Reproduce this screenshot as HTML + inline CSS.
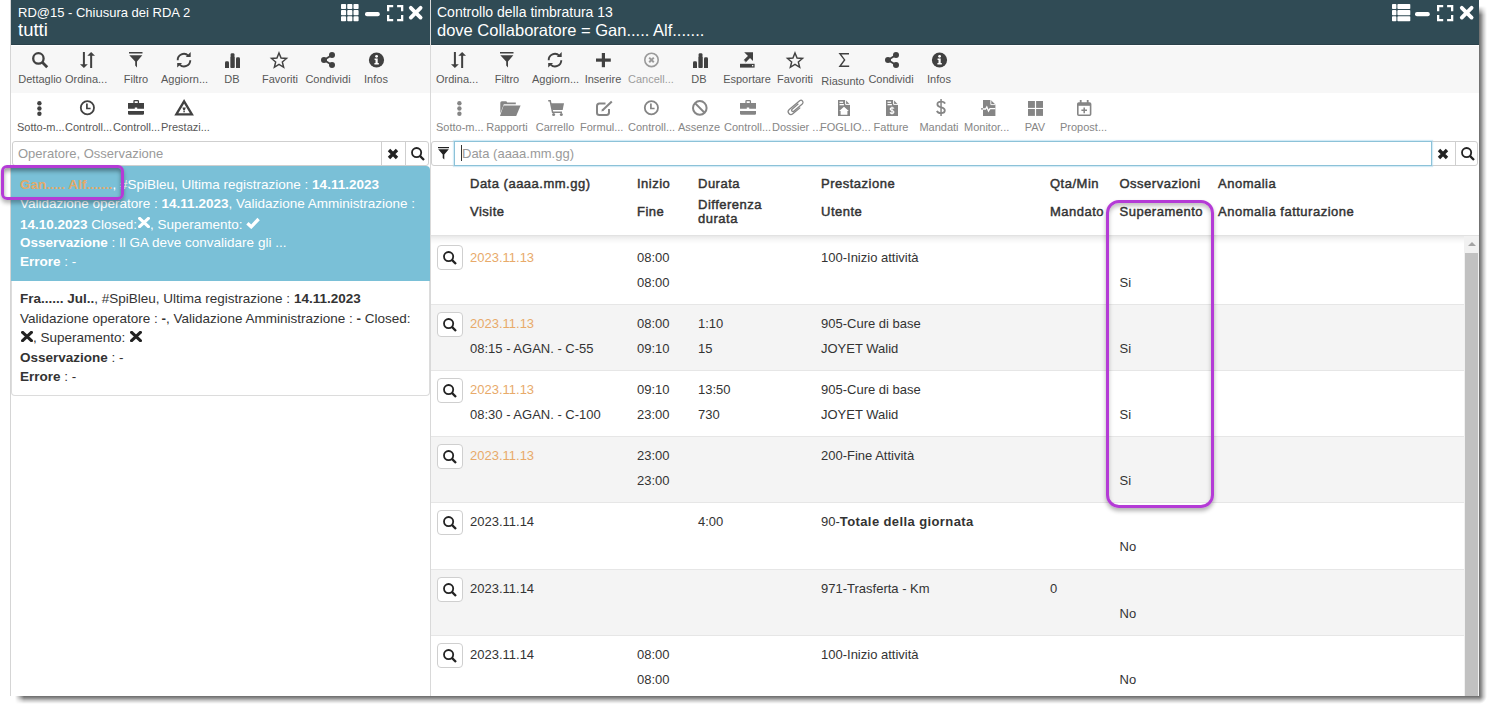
<!DOCTYPE html><html><head><meta charset="utf-8"><style>
*{box-sizing:border-box;margin:0;padding:0}
html,body{width:1494px;height:711px;overflow:hidden;background:#fff;font-family:"Liberation Sans",sans-serif;color:#333}
.abs{position:absolute}
.hdr{position:absolute;top:0;height:45px;background:#304b55;color:#fff;box-shadow:inset 0 -1px 0 rgba(0,0,0,0.12)}
.t1{position:absolute;font-size:13px;margin-top:1px;white-space:nowrap;line-height:1}
.t2{position:absolute;font-size:18.5px;white-space:nowrap;line-height:1}
.ico{position:absolute;line-height:0}
.lb{position:absolute;font-size:11px;line-height:11px;white-space:nowrap;color:#575757}
.lbc{width:60px;text-align:center}
.g{color:#868686}
.dis{color:#9c9c9c}
.rias{margin-top:1.5px}
</style></head><body>
<div class="abs" style="left:1479px;top:0;width:8px;height:696px;background:linear-gradient(to right,rgba(0,0,0,0.58), rgba(0,0,0,0.45) 25%, rgba(0,0,0,0.22) 55%, rgba(0,0,0,0.06) 85%, rgba(0,0,0,0) 100%);-webkit-mask-image:linear-gradient(to bottom,transparent 6px,#000 15px);mask-image:linear-gradient(to bottom,transparent 6px,#000 15px)"></div>
<div class="abs" style="left:10px;top:696px;width:1469px;height:8px;background:linear-gradient(to bottom,rgba(0,0,0,0.58), rgba(0,0,0,0.45) 25%, rgba(0,0,0,0.22) 55%, rgba(0,0,0,0.06) 85%, rgba(0,0,0,0) 100%);-webkit-mask-image:linear-gradient(to right,transparent 5px,#000 14px);mask-image:linear-gradient(to right,transparent 5px,#000 14px)"></div>
<div class="abs" style="left:1479px;top:696px;width:8px;height:8px;background:radial-gradient(circle at 0 0,rgba(0,0,0,0.58), rgba(0,0,0,0.45) 2px, rgba(0,0,0,0.22) 4.4px, rgba(0,0,0,0.06) 6.8px, rgba(0,0,0,0) 8px)"></div>
<div class="abs" style="left:10px;top:0;width:420px;height:696px;background:#fff;border-left:1px solid #d5d5d5"></div>
<div class="abs" style="left:430px;top:0;width:1049px;height:696px;background:#fff;border-left:1px solid #d9d9d9"></div>
<div class="hdr" style="left:11px;width:419px"><div class="t1" style="left:7px;top:5px">RD@15 - Chiusura dei RDA 2</div><div class="t2" style="left:7px;top:21px">tutti</div></div>
<div class="hdr" style="left:431px;width:1048px"><div class="t1" style="left:6px;top:4px;font-size:14px">Controllo della timbratura 13</div><div class="t2" style="left:6px;top:22px;font-size:16.5px">dove Collaboratore = Gan..... Alf.......</div></div>
<div class="ico" style="left:341.3px;top:3.9px"><svg width="18" height="18" viewBox="0 0 18 18" style="display:block;overflow:visible"><rect x="0" y="0" width="5.1" height="5.1" rx="0.8" fill="#fff"/><rect x="0" y="6.1" width="5.1" height="5.1" rx="0.8" fill="#fff"/><rect x="0" y="12.2" width="5.1" height="5.1" rx="0.8" fill="#fff"/><rect x="6.25" y="0" width="5.1" height="5.1" rx="0.8" fill="#fff"/><rect x="6.25" y="6.1" width="5.1" height="5.1" rx="0.8" fill="#fff"/><rect x="6.25" y="12.2" width="5.1" height="5.1" rx="0.8" fill="#fff"/><rect x="12.5" y="0" width="5.1" height="5.1" rx="0.8" fill="#fff"/><rect x="12.5" y="6.1" width="5.1" height="5.1" rx="0.8" fill="#fff"/><rect x="12.5" y="12.2" width="5.1" height="5.1" rx="0.8" fill="#fff"/></svg></div>
<div class="ico" style="left:365px;top:11.8px"><svg width="15" height="4" viewBox="0 0 15 4" style="display:block;overflow:visible"><rect x="0" y="0" width="14.8" height="4.2" rx="2" fill="#fff"/></svg></div>
<div class="ico" style="left:386.8px;top:5px"><svg width="17" height="17" viewBox="0 0 17 17" style="display:block;overflow:visible"><path d="M0 6.2 V0 H6.2 V2.3 H2.3 V6.2 Z" fill="#fff"/><path d="M0 6.2 V0 H6.2 V2.3 H2.3 V6.2 Z" fill="#fff" transform="translate(16.3,0) scale(-1,1)"/><path d="M0 6.2 V0 H6.2 V2.3 H2.3 V6.2 Z" fill="#fff" transform="translate(0,16.3) scale(1,-1)"/><path d="M0 6.2 V0 H6.2 V2.3 H2.3 V6.2 Z" fill="#fff" transform="translate(16.3,16.3) scale(-1,-1)"/></svg></div>
<div class="ico" style="left:409.3px;top:6.3px"><svg width="14" height="14" viewBox="0 0 14 14" style="display:block;overflow:visible"><path d="M1.8 1.8 L11.6 11.6 M11.6 1.8 L1.8 11.6" stroke="#fff" stroke-width="3.8" stroke-linecap="round"/></svg></div>
<div class="ico" style="left:1391.7px;top:3.9px"><svg width="19" height="18" viewBox="0 0 19 18" style="display:block;overflow:visible"><rect x="0" y="0" width="4.4" height="5.1" rx="0.8" fill="#fff"/><rect x="5.4" y="0" width="12.9" height="5.1" rx="0.8" fill="#fff"/><rect x="0" y="6.1" width="4.4" height="5.1" rx="0.8" fill="#fff"/><rect x="5.4" y="6.1" width="12.9" height="5.1" rx="0.8" fill="#fff"/><rect x="0" y="12.2" width="4.4" height="5.1" rx="0.8" fill="#fff"/><rect x="5.4" y="12.2" width="12.9" height="5.1" rx="0.8" fill="#fff"/></svg></div>
<div class="ico" style="left:1415px;top:11.8px"><svg width="15" height="4" viewBox="0 0 15 4" style="display:block;overflow:visible"><rect x="0" y="0" width="14.8" height="4.2" rx="2" fill="#fff"/></svg></div>
<div class="ico" style="left:1436.7px;top:5px"><svg width="17" height="17" viewBox="0 0 17 17" style="display:block;overflow:visible"><path d="M0 6.2 V0 H6.2 V2.3 H2.3 V6.2 Z" fill="#fff"/><path d="M0 6.2 V0 H6.2 V2.3 H2.3 V6.2 Z" fill="#fff" transform="translate(16.3,0) scale(-1,1)"/><path d="M0 6.2 V0 H6.2 V2.3 H2.3 V6.2 Z" fill="#fff" transform="translate(0,16.3) scale(1,-1)"/><path d="M0 6.2 V0 H6.2 V2.3 H2.3 V6.2 Z" fill="#fff" transform="translate(16.3,16.3) scale(-1,-1)"/></svg></div>
<div class="ico" style="left:1459.6px;top:6.3px"><svg width="14" height="14" viewBox="0 0 14 14" style="display:block;overflow:visible"><path d="M1.8 1.8 L11.6 11.6 M11.6 1.8 L1.8 11.6" stroke="#fff" stroke-width="3.8" stroke-linecap="round"/></svg></div>
<div class="abs" style="left:11px;top:46px;width:419px;height:47px;background:#f7f7f7"></div>
<div class="abs" style="left:431px;top:46px;width:1048px;height:47px;background:#f7f7f7"></div>
<div class="ico" style="left:32px;top:52px"><svg width="16" height="16" viewBox="0 0 16 16" style="display:block;overflow:visible"><circle cx="6.4" cy="6.4" r="5.2" fill="none" stroke="#414141" stroke-width="2.3"/><line x1="10" y1="10" x2="15.2" y2="15.2" stroke="#414141" stroke-width="2.8"/></svg></div>
<div class="lb lbc " style="left:10px;top:74px">Dettaglio</div>
<div class="ico" style="left:80px;top:52px"><svg width="15" height="16" viewBox="0 0 15 16" style="display:block;overflow:visible"><rect x="2.9" y="0" width="2" height="13" fill="#414141"/><polygon points="0,12.2 7.8,12.2 3.9,16" fill="#414141"/><polygon points="7.3,3.8 15,3.8 11.15,0" fill="#414141"/><rect x="10.15" y="3" width="2" height="13" fill="#414141"/></svg></div>
<div class="lb " style="left:65px;top:74px">Ordina...</div>
<div class="ico" style="left:129px;top:52px"><svg width="14" height="16" viewBox="0 0 14 16" style="display:block;overflow:visible"><rect x="0" y="0" width="13.5" height="1.5" fill="#414141"/><polygon points="0.3,3.2 13.3,3.2 8,9.5 8,15.5 6.2,13.4 6.2,9.5" fill="#414141"/></svg></div>
<div class="lb lbc " style="left:106px;top:74px">Filtro</div>
<div class="ico" style="left:176px;top:52px"><svg width="16" height="16" viewBox="0 0 16 16" style="display:block;overflow:visible"><path d="M1.7 8.2 A6.2 6.2 0 0 1 12.3 3.6" fill="none" stroke="#414141" stroke-width="1.9"/><polygon points="14.7,0 14.7,4.9 9.8,4.9" fill="#414141"/><path d="M14.3 8.3 A6.2 6.2 0 0 1 3.7 12.6" fill="none" stroke="#414141" stroke-width="1.9"/><polygon points="1.2,15.6 1.2,10.9 6.1,10.9" fill="#414141"/></svg></div>
<div class="lb " style="left:161px;top:74px">Aggiorn...</div>
<div class="ico" style="left:225px;top:53px"><svg width="15" height="15" viewBox="0 0 15 15" style="display:block;overflow:visible"><rect x="0" y="8.3" width="4" height="6.7" rx="1.4" fill="#414141"/><rect x="0" y="11" width="4" height="4" fill="#414141"/><rect x="5.6" y="0.2" width="3.9" height="14.8" rx="1.4" fill="#414141"/><rect x="5.6" y="4" width="3.9" height="11" fill="#414141"/><rect x="11" y="4.2" width="4" height="10.8" rx="1.4" fill="#414141"/><rect x="11" y="8" width="4" height="7" fill="#414141"/></svg></div>
<div class="lb lbc " style="left:202px;top:74px">DB</div>
<div class="ico" style="left:271px;top:53px"><svg width="16" height="14" viewBox="0 0.4 16 14" style="display:block;overflow:visible"><polygon points="8.00,0.40 10.06,5.47 15.51,5.86 11.33,9.38 12.64,14.69 8.00,11.80 3.36,14.69 4.67,9.38 0.49,5.86 5.94,5.47" fill="none" stroke="#414141" stroke-width="1.45" stroke-linejoin="miter" stroke-miterlimit="10"/></svg></div>
<div class="lb lbc " style="left:250px;top:74px">Favoriti</div>
<div class="ico" style="left:321px;top:52px"><svg width="14" height="16" viewBox="0 0 14 16" style="display:block;overflow:visible"><line x1="3" y1="8" x2="11" y2="3" stroke="#414141" stroke-width="2"/><line x1="3" y1="8" x2="11" y2="13" stroke="#414141" stroke-width="2"/><circle cx="11" cy="3" r="3" fill="#414141"/><circle cx="3" cy="8" r="3" fill="#414141"/><circle cx="11" cy="13" r="3" fill="#414141"/></svg></div>
<div class="lb lbc " style="left:298px;top:74px">Condividi</div>
<div class="ico" style="left:368.5px;top:52px"><svg width="15" height="16" viewBox="0 0 15 16" style="display:block;overflow:visible"><circle cx="7.5" cy="8" r="7.6" fill="#414141"/><circle cx="7.6" cy="4.3" r="1.4" fill="#fff"/><path d="M5.6 6.6 H8.7 V11 H9.8 V12.6 H5.4 V11 H6.5 V8.1 H5.6 Z" fill="#fff"/></svg></div>
<div class="lb lbc " style="left:346px;top:74px">Infos</div>
<div class="ico" style="left:37px;top:100.8px"><svg width="5" height="15" viewBox="0 0 5 15" style="display:block;overflow:visible"><circle cx="2.4" cy="2.3" r="2.2" fill="#414141"/><circle cx="2.4" cy="7.5" r="2.2" fill="#414141"/><circle cx="2.4" cy="12.7" r="2.2" fill="#414141"/></svg></div>
<div class="lb " style="left:17px;top:122px">Sotto-m...</div>
<div class="ico" style="left:80.4px;top:100.3px"><svg width="15" height="16" viewBox="0 0 15 16" style="display:block;overflow:visible"><circle cx="7.4" cy="7.7" r="6.6" fill="none" stroke="#414141" stroke-width="1.8"/><path d="M6.9 3.6 V8.5 H10.6" fill="none" stroke="#414141" stroke-width="1.7"/></svg></div>
<div class="lb " style="left:65px;top:122px">Controll...</div>
<div class="ico" style="left:127.8px;top:100.3px"><svg width="16" height="15" viewBox="0 0 16 15" style="display:block;overflow:visible"><path d="M6 3.2 V1.2 Q6 0.6 6.6 0.6 H9.8 Q10.4 0.6 10.4 1.2 V3.2" fill="none" stroke="#414141" stroke-width="1.3"/><path d="M0 3 H16 V8.7 H9.2 V7.6 H6.8 V8.7 H0 Z" fill="#414141"/><path d="M0 11 H16 V13.6 Q16 14.8 14.8 14.8 H1.2 Q0 14.8 0 13.6 Z" fill="#414141"/></svg></div>
<div class="lb " style="left:113px;top:122px">Controll...</div>
<div class="ico" style="left:175px;top:100.3px"><svg width="18" height="16" viewBox="0 0 18 16" style="display:block;overflow:visible"><polygon points="9.1,1.3 16.9,14.4 1.3,14.4" fill="none" stroke="#414141" stroke-width="2.3" stroke-linejoin="miter"/><path d="M7.4 7.6 H10.8 L9.8 10.4 H8.4 Z" fill="#414141"/><rect x="8.4" y="11" width="1.4" height="1.3" fill="#414141"/></svg></div>
<div class="lb " style="left:161px;top:122px">Prestazi...</div>
<div class="ico" style="left:451px;top:52px"><svg width="15" height="16" viewBox="0 0 15 16" style="display:block;overflow:visible"><rect x="2.9" y="0" width="2" height="13" fill="#414141"/><polygon points="0,12.2 7.8,12.2 3.9,16" fill="#414141"/><polygon points="7.3,3.8 15,3.8 11.15,0" fill="#414141"/><rect x="10.15" y="3" width="2" height="13" fill="#414141"/></svg></div>
<div class="lb " style="left:436px;top:74px">Ordina...</div>
<div class="ico" style="left:500px;top:52px"><svg width="14" height="16" viewBox="0 0 14 16" style="display:block;overflow:visible"><rect x="0" y="0" width="13.5" height="1.5" fill="#414141"/><polygon points="0.3,3.2 13.3,3.2 8,9.5 8,15.5 6.2,13.4 6.2,9.5" fill="#414141"/></svg></div>
<div class="lb lbc " style="left:477px;top:74px">Filtro</div>
<div class="ico" style="left:547px;top:52px"><svg width="16" height="16" viewBox="0 0 16 16" style="display:block;overflow:visible"><path d="M1.7 8.2 A6.2 6.2 0 0 1 12.3 3.6" fill="none" stroke="#414141" stroke-width="1.9"/><polygon points="14.7,0 14.7,4.9 9.8,4.9" fill="#414141"/><path d="M14.3 8.3 A6.2 6.2 0 0 1 3.7 12.6" fill="none" stroke="#414141" stroke-width="1.9"/><polygon points="1.2,15.6 1.2,10.9 6.1,10.9" fill="#414141"/></svg></div>
<div class="lb " style="left:532px;top:74px">Aggiorn...</div>
<div class="ico" style="left:595.7px;top:53.4px"><svg width="15" height="14" viewBox="0 0 15 14" style="display:block;overflow:visible"><rect x="5.8" y="0" width="3.2" height="14.2" fill="#414141"/><rect x="0" y="5.5" width="14.8" height="3.2" fill="#414141"/></svg></div>
<div class="lb lbc " style="left:573px;top:74px">Inserire</div>
<div class="ico" style="left:644.4px;top:52px"><svg width="15" height="16" viewBox="0 0 15 16" style="display:block;overflow:visible"><circle cx="7.5" cy="7.9" r="6.7" fill="none" stroke="#9a9a9a" stroke-width="1.6"/><path d="M5.2 5.6 L9.8 10.2 M9.8 5.6 L5.2 10.2" stroke="#9a9a9a" stroke-width="2"/></svg></div>
<div class="lb dis" style="left:628px;top:74px">Cancell...</div>
<div class="ico" style="left:693px;top:53px"><svg width="15" height="15" viewBox="0 0 15 15" style="display:block;overflow:visible"><rect x="0" y="8.3" width="4" height="6.7" rx="1.4" fill="#414141"/><rect x="0" y="11" width="4" height="4" fill="#414141"/><rect x="5.6" y="0.2" width="3.9" height="14.8" rx="1.4" fill="#414141"/><rect x="5.6" y="4" width="3.9" height="11" fill="#414141"/><rect x="11" y="4.2" width="4" height="10.8" rx="1.4" fill="#414141"/><rect x="11" y="8" width="4" height="7" fill="#414141"/></svg></div>
<div class="lb lbc " style="left:669px;top:74px">DB</div>
<div class="ico" style="left:740px;top:52.3px"><svg width="15" height="16" viewBox="0 0 15 16" style="display:block;overflow:visible"><rect x="0" y="11.8" width="14.6" height="3.8" fill="#414141"/><rect x="12" y="13" width="1.3" height="1.3" fill="#f7f7f7"/><path d="M4.6 9.4 L10.2 3.8" stroke="#414141" stroke-width="3"/><polygon points="4.2,0.2 13,0.2 13,9" fill="#414141"/><path d="M3.2 7.7 L5.4 9.9" stroke="#f7f7f7" stroke-width="0.9"/></svg></div>
<div class="lb lbc " style="left:717px;top:74px">Esportare</div>
<div class="ico" style="left:787px;top:53px"><svg width="16" height="14" viewBox="0 0.4 16 14" style="display:block;overflow:visible"><polygon points="8.00,0.40 10.06,5.47 15.51,5.86 11.33,9.38 12.64,14.69 8.00,11.80 3.36,14.69 4.67,9.38 0.49,5.86 5.94,5.47" fill="none" stroke="#414141" stroke-width="1.45" stroke-linejoin="miter" stroke-miterlimit="10"/></svg></div>
<div class="lb lbc " style="left:765px;top:74px">Favoriti</div>
<div class="ico" style="left:838.8px;top:53px"><svg width="10" height="14" viewBox="0 0 10 14" style="display:block;overflow:visible"><path d="M10 0.7 H0.9 L5.6 6.9 L0.9 13.3 H10.2" fill="none" stroke="#414141" stroke-width="1.4" stroke-linejoin="miter"/></svg></div>
<div class="lb lbc rias" style="left:813px;top:74px">Riasunto</div>
<div class="ico" style="left:885px;top:52px"><svg width="14" height="16" viewBox="0 0 14 16" style="display:block;overflow:visible"><line x1="3" y1="8" x2="11" y2="3" stroke="#414141" stroke-width="2"/><line x1="3" y1="8" x2="11" y2="13" stroke="#414141" stroke-width="2"/><circle cx="11" cy="3" r="3" fill="#414141"/><circle cx="3" cy="8" r="3" fill="#414141"/><circle cx="11" cy="13" r="3" fill="#414141"/></svg></div>
<div class="lb lbc " style="left:861px;top:74px">Condividi</div>
<div class="ico" style="left:932px;top:52px"><svg width="15" height="16" viewBox="0 0 15 16" style="display:block;overflow:visible"><circle cx="7.5" cy="8" r="7.6" fill="#414141"/><circle cx="7.6" cy="4.3" r="1.4" fill="#fff"/><path d="M5.6 6.6 H8.7 V11 H9.8 V12.6 H5.4 V11 H6.5 V8.1 H5.6 Z" fill="#fff"/></svg></div>
<div class="lb lbc " style="left:909px;top:74px">Infos</div>
<div class="ico" style="left:456.7px;top:100.8px"><svg width="5" height="15" viewBox="0 0 5 15" style="display:block;overflow:visible"><circle cx="2.4" cy="2.3" r="2.2" fill="#858585"/><circle cx="2.4" cy="7.5" r="2.2" fill="#858585"/><circle cx="2.4" cy="12.7" r="2.2" fill="#858585"/></svg></div>
<div class="lb g" style="left:436px;top:122px">Sotto-m...</div>
<div class="ico" style="left:499.6px;top:101px"><svg width="21" height="15" viewBox="0 0 21 15" style="display:block;overflow:visible"><path d="M0.3 12.5 V1.8 Q0.3 0.3 1.8 0.3 H5.8 Q6.8 0.3 7.2 1.5 H15.8 V3.2 H3.8 Z" fill="#858585"/><polygon points="3.6,4.6 20.6,4.6 16.2,15 0,15" fill="#858585"/></svg></div>
<div class="lb lbc g" style="left:477px;top:122px">Rapporti</div>
<div class="ico" style="left:548px;top:100px"><svg width="16" height="16" viewBox="0 0 16 16" style="display:block;overflow:visible"><path d="M0.2 0.8 H2.2 L4.6 12.2 H14" fill="none" stroke="#858585" stroke-width="1.5"/><polygon points="2.9,3.2 16,3.2 14.7,10 4.3,10" fill="#858585"/><circle cx="5.6" cy="14.5" r="1.5" fill="#858585"/><circle cx="13.3" cy="14.5" r="1.5" fill="#858585"/></svg></div>
<div class="lb lbc g" style="left:525px;top:122px">Carrello</div>
<div class="ico" style="left:595.7px;top:101px"><svg width="17" height="15" viewBox="0 0 17 15" style="display:block;overflow:visible"><path d="M9.5 2.5 H3.5 Q1 2.5 1 5 V11.8 Q1 14 3.3 14 H10.6 Q13 14 13 11.6 V8" fill="none" stroke="#858585" stroke-width="2"/><path d="M6.3 9.6 L15.8 0.6" stroke="#858585" stroke-width="2.1"/><polygon points="5.4,10.6 6,8.2 7.6,9.8" fill="#858585"/></svg></div>
<div class="lb g" style="left:580px;top:122px">Formul...</div>
<div class="ico" style="left:644px;top:100.3px"><svg width="15" height="16" viewBox="0 0 15 16" style="display:block;overflow:visible"><circle cx="7.4" cy="7.7" r="6.6" fill="none" stroke="#858585" stroke-width="1.8"/><path d="M6.9 3.6 V8.5 H10.6" fill="none" stroke="#858585" stroke-width="1.7"/></svg></div>
<div class="lb g" style="left:628px;top:122px">Controll...</div>
<div class="ico" style="left:691.8px;top:100px"><svg width="16" height="16" viewBox="0 0 16 16" style="display:block;overflow:visible"><circle cx="7.8" cy="7.9" r="6.8" fill="none" stroke="#858585" stroke-width="2"/><line x1="3" y1="3.1" x2="12.6" y2="12.7" stroke="#858585" stroke-width="2"/></svg></div>
<div class="lb lbc g" style="left:669px;top:122px">Assenze</div>
<div class="ico" style="left:739.6px;top:100.3px"><svg width="16" height="15" viewBox="0 0 16 15" style="display:block;overflow:visible"><path d="M6 3.2 V1.2 Q6 0.6 6.6 0.6 H9.8 Q10.4 0.6 10.4 1.2 V3.2" fill="none" stroke="#858585" stroke-width="1.3"/><path d="M0 3 H16 V8.7 H9.2 V7.6 H6.8 V8.7 H0 Z" fill="#858585"/><path d="M0 11 H16 V13.6 Q16 14.8 14.8 14.8 H1.2 Q0 14.8 0 13.6 Z" fill="#858585"/></svg></div>
<div class="lb g" style="left:724px;top:122px">Controll...</div>
<div class="ico" style="left:787.5px;top:100px"><svg width="17" height="15" viewBox="0 0 17 15" style="display:block;overflow:visible"><g transform="translate(8.3,7.4) rotate(-40) translate(-9.6,-2.9)"><path d="M12.5 5.6 H2.8 A2.8 2.8 0 0 1 2.8 0 H16.4 A2.05 2.05 0 0 1 16.4 4.1 H5.2 A1.3 1.3 0 0 1 5.2 1.5 H13.5" fill="none" stroke="#858585" stroke-width="1.25"/></g></svg></div>
<div class="lb g" style="left:772px;top:122px">Dossier ...</div>
<div class="ico" style="left:838px;top:100px"><svg width="12" height="16" viewBox="0 0 12 16" style="display:block;overflow:visible"><path d="M0 0 H7.6 L12 4.4 V16 H0 Z" fill="#858585"/><path d="M7.6 0 V4.4 H12" fill="none" stroke="#fff" stroke-width="1"/><rect x="1.5" y="1.6" width="3.6" height="1.3" fill="#fff"/><rect x="1.5" y="4" width="4.4" height="1.3" fill="#fff"/><polygon points="6,6.8 10.8,11 9.4,11 9.4,14.8 2.6,14.8 2.6,11 1.2,11" fill="#fff"/></svg></div>
<div class="lb g" style="left:820px;top:122px">FOGLIO...</div>
<div class="ico" style="left:886px;top:100px"><svg width="12" height="16" viewBox="0 0 12 16" style="display:block;overflow:visible"><path d="M0 0 H7.6 L12 4.4 V16 H0 Z" fill="#858585"/><path d="M7.6 0 V4.4 H12" fill="none" stroke="#fff" stroke-width="1"/><rect x="1.5" y="1.6" width="3.6" height="1.3" fill="#fff"/><rect x="1.5" y="4" width="4.4" height="1.3" fill="#fff"/><path d="M8 8.6 Q7.6 7.8 6 7.8 Q4.2 7.8 4.2 9.1 Q4.2 10.2 6 10.5 Q7.9 10.8 7.9 12 Q7.9 13.3 6 13.3 Q4.5 13.3 4 12.4" fill="none" stroke="#fff" stroke-width="1.2"/><rect x="5.5" y="6.6" width="1" height="7.8" fill="#fff"/></svg></div>
<div class="lb lbc g" style="left:861px;top:122px">Fatture</div>
<div class="ico" style="left:935.7px;top:99px"><svg width="10" height="17" viewBox="0 0 10 17" style="display:block;overflow:visible"><path d="M9 4.6 Q8.3 2.6 5.2 2.6 Q1.4 2.6 1.4 5.3 Q1.4 7.6 5 8.3 Q8.8 9 8.8 11.5 Q8.8 14.1 5 14.1 Q1.8 14.1 0.9 11.8" fill="none" stroke="#858585" stroke-width="1.8"/><rect x="4.3" y="0" width="1.5" height="17" fill="#858585"/></svg></div>
<div class="lb lbc g" style="left:909px;top:122px">Mandati</div>
<div class="ico" style="left:981px;top:100px"><svg width="15" height="16" viewBox="0 0 15 16" style="display:block;overflow:visible"><path d="M2 0 H9.8 L14.4 4.6 V16 H2 Z" fill="#858585"/><path d="M9.8 0 V4.6 H14.4" fill="none" stroke="#fff" stroke-width="0.9"/><path d="M0 9 H4.5 L5.8 7 L7.5 11 L9 8.6 H14.4" fill="none" stroke="#fff" stroke-width="1.3"/><path d="M0 8.8 H2" stroke="#858585" stroke-width="1.3"/></svg></div>
<div class="lb g" style="left:964px;top:122px">Monitor...</div>
<div class="ico" style="left:1028px;top:101px"><svg width="15" height="15" viewBox="0 0 15 15" style="display:block;overflow:visible"><rect x="0" y="0" width="6.9" height="6.9" fill="#858585"/><rect x="8.1" y="0" width="6.9" height="6.9" fill="#858585"/><rect x="0" y="8" width="6.9" height="6.9" fill="#858585"/><rect x="8.1" y="8" width="6.9" height="6.9" fill="#858585"/></svg></div>
<div class="lb lbc g" style="left:1005px;top:122px">PAV</div>
<div class="ico" style="left:1076.6px;top:100px"><svg width="15" height="16" viewBox="0 0 15 16" style="display:block;overflow:visible"><rect x="0.8" y="3" width="12.8" height="12.2" rx="1" fill="none" stroke="#858585" stroke-width="1.6"/><rect x="0.8" y="3" width="12.8" height="2.8" fill="#858585"/><rect x="2.8" y="0" width="1.8" height="3.5" fill="#858585"/><rect x="9.8" y="0" width="1.8" height="3.5" fill="#858585"/><path d="M7.2 7.5 V13.2 M4.4 10.3 H10" stroke="#858585" stroke-width="1.5"/></svg></div>
<div class="lb g" style="left:1060px;top:122px">Propost...</div>
<div class="abs" style="left:12px;top:141px;width:417px;height:25px;border:1px solid #cfcfcf;border-radius:3px;background:#fff"></div>
<div class="abs" style="left:381px;top:141px;width:1px;height:25px;background:#cfcfcf"></div>
<div class="abs" style="left:405px;top:141px;width:1px;height:25px;background:#cfcfcf"></div>
<div class="abs" style="left:18px;top:147px;font-size:13px;line-height:13px;color:#9a9a9a;white-space:nowrap">Operatore, Osservazione</div>
<div class="ico" style="left:387px;top:147.5px"><svg width="12" height="12" viewBox="0 0 12 12" style="display:block;overflow:visible"><path d="M2 2 L10 10 M10 2 L2 10" stroke="#222" stroke-width="3.4"/></svg></div>
<div class="ico" style="left:411px;top:146.5px"><svg width="14" height="14" viewBox="0 0 14 14" style="display:block;overflow:visible"><circle cx="5.6" cy="5.6" r="4.6" fill="none" stroke="#222" stroke-width="1.8"/><line x1="8.9" y1="8.9" x2="13" y2="13" stroke="#222" stroke-width="2.3"/></svg></div>
<div class="abs" style="left:431px;top:141px;width:1047px;height:25px;border:1px solid #cfcfcf;border-radius:3px;background:#fff"></div>
<div class="ico" style="left:438px;top:147px"><svg width="12" height="14" viewBox="0 0 12 14" style="display:block;overflow:visible"><rect x="0" y="0" width="11" height="1.2" fill="#222"/><polygon points="0.2,2.2 10.8,2.2 6.3,7.6 6.3,12.6 4.7,11 4.7,7.6" fill="#222"/></svg></div>
<div class="abs" style="left:454px;top:141px;width:978px;height:25px;border:1px solid #8cc2d8;box-shadow:0 0 1px 1px rgba(160,210,235,0.45);background:#fff"></div>
<div class="abs" style="left:461px;top:145px;width:1px;height:16px;background:#333"></div>
<div class="abs" style="left:462px;top:147px;font-size:13px;line-height:13px;color:#9a9a9a;white-space:nowrap">Data (aaaa.mm.gg)</div>
<div class="abs" style="left:1455px;top:141px;width:1px;height:25px;background:#cfcfcf"></div>
<div class="ico" style="left:1437px;top:147.5px"><svg width="12" height="12" viewBox="0 0 12 12" style="display:block;overflow:visible"><path d="M2 2 L10 10 M10 2 L2 10" stroke="#222" stroke-width="3.4"/></svg></div>
<div class="ico" style="left:1461px;top:146.5px"><svg width="14" height="14" viewBox="0 0 14 14" style="display:block;overflow:visible"><circle cx="5.6" cy="5.6" r="4.6" fill="none" stroke="#222" stroke-width="1.8"/><line x1="8.9" y1="8.9" x2="13" y2="13" stroke="#222" stroke-width="2.3"/></svg></div>
<div class="abs" style="left:11px;top:166px;width:419px;height:115px;background:#7ac0d7;border-top-right-radius:4px"></div>
<div class="abs" style="left:11px;top:281px;width:419px;height:115px;background:#fff;border:1px solid #dcdcdc;border-top:none;border-radius:0 0 4px 4px"></div>
<div style="position:absolute;left:20px;font-size:13.5px;line-height:13px;white-space:nowrap;top:177.5px;color:#ffffff"><b style="color:#e3aa68">Gan..... Alf.......</b>, #SpiBleu, Ultima registrazione : <b>14.11.2023</b></div>
<div style="position:absolute;left:20px;font-size:13.5px;line-height:13px;white-space:nowrap;top:197px;color:#ffffff">Validazione operatore : <b>14.11.2023</b>, Validazione Amministrazione :</div>
<div style="position:absolute;left:20px;font-size:13.5px;line-height:13px;white-space:nowrap;top:216.5px;color:#ffffff"><b>14.10.2023</b> Closed:<svg width="12" height="11" viewBox="0 0 12 11" style="display:inline-block;vertical-align:0px;margin:0 0.5px"><path d="M1.6 1.4 L10.4 9.6 M10.4 1.4 L1.6 9.6" stroke="#fff" stroke-width="3.1" stroke-linecap="round"/></svg>, Superamento: <svg width="14" height="12" viewBox="0 0 14 12" style="display:inline-block;vertical-align:-0.5px"><path d="M1.4 6.2 L5.2 9.8 L12.6 2" fill="none" stroke="#fff" stroke-width="3.3"/></svg></div>
<div style="position:absolute;left:20px;font-size:13.5px;line-height:13px;white-space:nowrap;top:235.5px;color:#ffffff"><b>Osservazione</b> : Il GA deve convalidare gli ...</div>
<div style="position:absolute;left:20px;font-size:13.5px;line-height:13px;white-space:nowrap;top:255px;color:#ffffff"><b>Errore</b> : -</div>
<div style="position:absolute;left:20px;font-size:13.5px;line-height:13px;white-space:nowrap;top:292px;color:#333333"><b>Fra...... Jul..</b>, #SpiBleu, Ultima registrazione : <b>14.11.2023</b></div>
<div style="position:absolute;left:20px;font-size:13.5px;line-height:13px;white-space:nowrap;top:311.5px;color:#333333">Validazione operatore : <b>-</b>, Validazione Amministrazione : <b>-</b> Closed:</div>
<div style="position:absolute;left:20px;font-size:13.5px;line-height:13px;white-space:nowrap;top:331px;color:#333333"><svg width="12" height="11" viewBox="0 0 12 11" style="display:inline-block;vertical-align:0px;margin:0 0.5px"><path d="M1.6 1.4 L10.4 9.6 M10.4 1.4 L1.6 9.6" stroke="#222" stroke-width="3.1" stroke-linecap="round"/></svg>, Superamento: <svg width="12" height="11" viewBox="0 0 12 11" style="display:inline-block;vertical-align:0px;margin:0 0.5px"><path d="M1.6 1.4 L10.4 9.6 M10.4 1.4 L1.6 9.6" stroke="#222" stroke-width="3.1" stroke-linecap="round"/></svg></div>
<div style="position:absolute;left:20px;font-size:13.5px;line-height:13px;white-space:nowrap;top:350.5px;color:#333333"><b>Osservazione</b> : -</div>
<div style="position:absolute;left:20px;font-size:13.5px;line-height:13px;white-space:nowrap;top:369.5px;color:#333333"><b>Errore</b> : -</div>
<div style="position:absolute;font-size:13px;line-height:13px;white-space:nowrap;font-weight:normal;-webkit-text-stroke:0.45px #333;letter-spacing:0.5px;color:#333;left:470px;top:177px">Data (aaaa.mm.gg)</div>
<div style="position:absolute;font-size:13px;line-height:13px;white-space:nowrap;font-weight:normal;-webkit-text-stroke:0.45px #333;letter-spacing:0.5px;color:#333;left:637px;top:177px">Inizio</div>
<div style="position:absolute;font-size:13px;line-height:13px;white-space:nowrap;font-weight:normal;-webkit-text-stroke:0.45px #333;letter-spacing:0.5px;color:#333;left:698px;top:177px">Durata</div>
<div style="position:absolute;font-size:13px;line-height:13px;white-space:nowrap;font-weight:normal;-webkit-text-stroke:0.45px #333;letter-spacing:0.5px;color:#333;left:821px;top:177px">Prestazione</div>
<div style="position:absolute;font-size:13px;line-height:13px;white-space:nowrap;font-weight:normal;-webkit-text-stroke:0.45px #333;letter-spacing:0.5px;color:#333;left:1050px;top:177px">Qta/Min</div>
<div style="position:absolute;font-size:13px;line-height:13px;white-space:nowrap;font-weight:normal;-webkit-text-stroke:0.45px #333;letter-spacing:0.5px;color:#333;left:1119.5px;top:177px">Osservazioni</div>
<div style="position:absolute;font-size:13px;line-height:13px;white-space:nowrap;font-weight:normal;-webkit-text-stroke:0.45px #333;letter-spacing:0.5px;color:#333;left:1218px;top:177px">Anomalia</div>
<div style="position:absolute;font-size:13px;line-height:13px;white-space:nowrap;font-weight:normal;-webkit-text-stroke:0.45px #333;letter-spacing:0.5px;color:#333;left:470px;top:204.5px">Visite</div>
<div style="position:absolute;font-size:13px;line-height:13px;white-space:nowrap;font-weight:normal;-webkit-text-stroke:0.45px #333;letter-spacing:0.5px;color:#333;left:637px;top:204.5px">Fine</div>
<div style="position:absolute;font-size:13px;line-height:13px;white-space:nowrap;font-weight:normal;-webkit-text-stroke:0.45px #333;letter-spacing:0.5px;color:#333;left:821px;top:204.5px">Utente</div>
<div style="position:absolute;font-size:13px;line-height:13px;white-space:nowrap;font-weight:normal;-webkit-text-stroke:0.45px #333;letter-spacing:0.5px;color:#333;left:1050px;top:204.5px">Mandato</div>
<div style="position:absolute;font-size:13px;line-height:13px;white-space:nowrap;font-weight:normal;-webkit-text-stroke:0.45px #333;letter-spacing:0.5px;color:#333;left:1119.5px;top:204.5px">Superamento</div>
<div style="position:absolute;font-size:13px;line-height:13px;white-space:nowrap;font-weight:normal;-webkit-text-stroke:0.45px #333;letter-spacing:0.5px;color:#333;left:1218px;top:204.5px">Anomalia fatturazione</div>
<div style="position:absolute;font-size:13px;line-height:13px;white-space:nowrap;font-weight:normal;-webkit-text-stroke:0.45px #333;letter-spacing:0.5px;color:#333;left:698px;top:197.5px">Differenza</div>
<div style="position:absolute;font-size:13px;line-height:13px;white-space:nowrap;font-weight:normal;-webkit-text-stroke:0.45px #333;letter-spacing:0.5px;color:#333;left:698px;top:211.5px">durata</div>
<div class="abs" style="left:431px;top:237px;width:1033px;height:67px;background:#fff;border-top:none"></div>
<div class="abs" style="left:437px;top:245px;width:26px;height:25px;border:1px solid #cfcfcf;border-radius:4px;background:#fff"></div>
<div class="ico" style="left:443px;top:250.5px"><svg width="14" height="14" viewBox="0 0 14 14" style="display:block;overflow:visible"><circle cx="5.6" cy="5.6" r="4.6" fill="none" stroke="#222" stroke-width="1.8"/><line x1="8.9" y1="8.9" x2="13" y2="13" stroke="#222" stroke-width="2.3"/></svg></div>
<div style="position:absolute;font-size:13px;line-height:13px;white-space:nowrap;color:#333;left:470px;top:250.7px;color:#e8aa6a">2023.11.13</div>
<div style="position:absolute;font-size:13px;line-height:13px;white-space:nowrap;color:#333;left:637px;top:250.7px;color:#333">08:00</div>
<div style="position:absolute;font-size:13px;line-height:13px;white-space:nowrap;color:#333;left:637px;top:275.9px;color:#333">08:00</div>
<div style="position:absolute;font-size:13px;line-height:13px;white-space:nowrap;color:#333;left:821px;top:250.7px;color:#333">100-Inizio attivit&agrave;</div>
<div style="position:absolute;font-size:13px;line-height:13px;white-space:nowrap;color:#333;left:1119.5px;top:275.9px;color:#333">Si</div>
<div class="abs" style="left:431px;top:304px;width:1033px;height:66px;background:#f4f4f4;border-top:1px solid #e6e6e6"></div>
<div class="abs" style="left:437px;top:312px;width:26px;height:25px;border:1px solid #cfcfcf;border-radius:4px;background:#fff"></div>
<div class="ico" style="left:443px;top:317.5px"><svg width="14" height="14" viewBox="0 0 14 14" style="display:block;overflow:visible"><circle cx="5.6" cy="5.6" r="4.6" fill="none" stroke="#222" stroke-width="1.8"/><line x1="8.9" y1="8.9" x2="13" y2="13" stroke="#222" stroke-width="2.3"/></svg></div>
<div style="position:absolute;font-size:13px;line-height:13px;white-space:nowrap;color:#333;left:470px;top:317.3px;color:#e8aa6a">2023.11.13</div>
<div style="position:absolute;font-size:13px;line-height:13px;white-space:nowrap;color:#333;left:470px;top:341.8px;color:#333">08:15 - AGAN. - C-55</div>
<div style="position:absolute;font-size:13px;line-height:13px;white-space:nowrap;color:#333;left:637px;top:317.3px;color:#333">08:00</div>
<div style="position:absolute;font-size:13px;line-height:13px;white-space:nowrap;color:#333;left:637px;top:341.8px;color:#333">09:10</div>
<div style="position:absolute;font-size:13px;line-height:13px;white-space:nowrap;color:#333;left:698px;top:317.3px;color:#333">1:10</div>
<div style="position:absolute;font-size:13px;line-height:13px;white-space:nowrap;color:#333;left:698px;top:341.8px;color:#333">15</div>
<div style="position:absolute;font-size:13px;line-height:13px;white-space:nowrap;color:#333;left:821px;top:317.3px;color:#333">905-Cure di base</div>
<div style="position:absolute;font-size:13px;line-height:13px;white-space:nowrap;color:#333;left:821px;top:341.8px;color:#333">JOYET Walid</div>
<div style="position:absolute;font-size:13px;line-height:13px;white-space:nowrap;color:#333;left:1119.5px;top:341.8px;color:#333">Si</div>
<div class="abs" style="left:431px;top:370px;width:1033px;height:66px;background:#fff;border-top:1px solid #e6e6e6"></div>
<div class="abs" style="left:437px;top:378px;width:26px;height:25px;border:1px solid #cfcfcf;border-radius:4px;background:#fff"></div>
<div class="ico" style="left:443px;top:383.5px"><svg width="14" height="14" viewBox="0 0 14 14" style="display:block;overflow:visible"><circle cx="5.6" cy="5.6" r="4.6" fill="none" stroke="#222" stroke-width="1.8"/><line x1="8.9" y1="8.9" x2="13" y2="13" stroke="#222" stroke-width="2.3"/></svg></div>
<div style="position:absolute;font-size:13px;line-height:13px;white-space:nowrap;color:#333;left:470px;top:383.3px;color:#e8aa6a">2023.11.13</div>
<div style="position:absolute;font-size:13px;line-height:13px;white-space:nowrap;color:#333;left:470px;top:407.8px;color:#333">08:30 - AGAN. - C-100</div>
<div style="position:absolute;font-size:13px;line-height:13px;white-space:nowrap;color:#333;left:637px;top:383.3px;color:#333">09:10</div>
<div style="position:absolute;font-size:13px;line-height:13px;white-space:nowrap;color:#333;left:637px;top:407.8px;color:#333">23:00</div>
<div style="position:absolute;font-size:13px;line-height:13px;white-space:nowrap;color:#333;left:698px;top:383.3px;color:#333">13:50</div>
<div style="position:absolute;font-size:13px;line-height:13px;white-space:nowrap;color:#333;left:698px;top:407.8px;color:#333">730</div>
<div style="position:absolute;font-size:13px;line-height:13px;white-space:nowrap;color:#333;left:821px;top:383.3px;color:#333">905-Cure di base</div>
<div style="position:absolute;font-size:13px;line-height:13px;white-space:nowrap;color:#333;left:821px;top:407.8px;color:#333">JOYET Walid</div>
<div style="position:absolute;font-size:13px;line-height:13px;white-space:nowrap;color:#333;left:1119.5px;top:407.8px;color:#333">Si</div>
<div class="abs" style="left:431px;top:436px;width:1033px;height:66px;background:#f4f4f4;border-top:1px solid #e6e6e6"></div>
<div class="abs" style="left:437px;top:444px;width:26px;height:25px;border:1px solid #cfcfcf;border-radius:4px;background:#fff"></div>
<div class="ico" style="left:443px;top:449.5px"><svg width="14" height="14" viewBox="0 0 14 14" style="display:block;overflow:visible"><circle cx="5.6" cy="5.6" r="4.6" fill="none" stroke="#222" stroke-width="1.8"/><line x1="8.9" y1="8.9" x2="13" y2="13" stroke="#222" stroke-width="2.3"/></svg></div>
<div style="position:absolute;font-size:13px;line-height:13px;white-space:nowrap;color:#333;left:470px;top:449.3px;color:#e8aa6a">2023.11.13</div>
<div style="position:absolute;font-size:13px;line-height:13px;white-space:nowrap;color:#333;left:637px;top:449.3px;color:#333">23:00</div>
<div style="position:absolute;font-size:13px;line-height:13px;white-space:nowrap;color:#333;left:637px;top:473.8px;color:#333">23:00</div>
<div style="position:absolute;font-size:13px;line-height:13px;white-space:nowrap;color:#333;left:821px;top:449.3px;color:#333">200-Fine Attivit&agrave;</div>
<div style="position:absolute;font-size:13px;line-height:13px;white-space:nowrap;color:#333;left:1119.5px;top:473.8px;color:#333">Si</div>
<div class="abs" style="left:431px;top:502px;width:1033px;height:67px;background:#fff;border-top:1px solid #e6e6e6"></div>
<div class="abs" style="left:437px;top:510px;width:26px;height:25px;border:1px solid #cfcfcf;border-radius:4px;background:#fff"></div>
<div class="ico" style="left:443px;top:515.5px"><svg width="14" height="14" viewBox="0 0 14 14" style="display:block;overflow:visible"><circle cx="5.6" cy="5.6" r="4.6" fill="none" stroke="#222" stroke-width="1.8"/><line x1="8.9" y1="8.9" x2="13" y2="13" stroke="#222" stroke-width="2.3"/></svg></div>
<div style="position:absolute;font-size:13px;line-height:13px;white-space:nowrap;color:#333;left:470px;top:515.3px;color:#333">2023.11.14</div>
<div style="position:absolute;font-size:13px;line-height:13px;white-space:nowrap;color:#333;left:698px;top:515.3px;color:#333">4:00</div>
<div style="position:absolute;font-size:13px;line-height:13px;white-space:nowrap;color:#333;left:821px;top:515.3px;color:#333">90-<b style="letter-spacing:0.4px">Totale della giornata</b></div>
<div style="position:absolute;font-size:13px;line-height:13px;white-space:nowrap;color:#333;left:1119.5px;top:539.8px;color:#333">No</div>
<div class="abs" style="left:431px;top:569px;width:1033px;height:66px;background:#f4f4f4;border-top:1px solid #e6e6e6"></div>
<div class="abs" style="left:437px;top:577px;width:26px;height:25px;border:1px solid #cfcfcf;border-radius:4px;background:#fff"></div>
<div class="ico" style="left:443px;top:582.5px"><svg width="14" height="14" viewBox="0 0 14 14" style="display:block;overflow:visible"><circle cx="5.6" cy="5.6" r="4.6" fill="none" stroke="#222" stroke-width="1.8"/><line x1="8.9" y1="8.9" x2="13" y2="13" stroke="#222" stroke-width="2.3"/></svg></div>
<div style="position:absolute;font-size:13px;line-height:13px;white-space:nowrap;color:#333;left:470px;top:582.3px;color:#333">2023.11.14</div>
<div style="position:absolute;font-size:13px;line-height:13px;white-space:nowrap;color:#333;left:821px;top:582.3px;color:#333">971-Trasferta - Km</div>
<div style="position:absolute;font-size:13px;line-height:13px;white-space:nowrap;color:#333;left:1050px;top:582.3px;color:#333">0</div>
<div style="position:absolute;font-size:13px;line-height:13px;white-space:nowrap;color:#333;left:1119.5px;top:606.8px;color:#333">No</div>
<div class="abs" style="left:431px;top:635px;width:1033px;height:61px;background:#fff;border-top:1px solid #e6e6e6"></div>
<div class="abs" style="left:437px;top:643px;width:26px;height:25px;border:1px solid #cfcfcf;border-radius:4px;background:#fff"></div>
<div class="ico" style="left:443px;top:648.5px"><svg width="14" height="14" viewBox="0 0 14 14" style="display:block;overflow:visible"><circle cx="5.6" cy="5.6" r="4.6" fill="none" stroke="#222" stroke-width="1.8"/><line x1="8.9" y1="8.9" x2="13" y2="13" stroke="#222" stroke-width="2.3"/></svg></div>
<div style="position:absolute;font-size:13px;line-height:13px;white-space:nowrap;color:#333;left:470px;top:648.3px;color:#333">2023.11.14</div>
<div style="position:absolute;font-size:13px;line-height:13px;white-space:nowrap;color:#333;left:637px;top:648.3px;color:#333">08:00</div>
<div style="position:absolute;font-size:13px;line-height:13px;white-space:nowrap;color:#333;left:637px;top:672.8px;color:#333">08:00</div>
<div style="position:absolute;font-size:13px;line-height:13px;white-space:nowrap;color:#333;left:821px;top:648.3px;color:#333">100-Inizio attivit&agrave;</div>
<div style="position:absolute;font-size:13px;line-height:13px;white-space:nowrap;color:#333;left:1119.5px;top:672.8px;color:#333">No</div>
<div class="abs" style="left:431px;top:235px;width:1048px;height:1px;background:#e2e2e2"></div>
<div class="abs" style="left:431px;top:236px;width:1033px;height:8px;background:linear-gradient(rgba(0,0,0,0.09),rgba(0,0,0,0.03) 50%,rgba(0,0,0,0))"></div>
<div class="abs" style="left:1464px;top:236px;width:15px;height:460px;background:#f1f1f1"></div>
<div class="abs" style="left:1467.5px;top:242px;width:0;height:0;border-left:4px solid transparent;border-right:4px solid transparent;border-bottom:4px solid #a3a3a3"></div>
<div class="abs" style="left:1465px;top:253px;width:13px;height:443px;background:#c1c1c1"></div>
<div class="abs" style="left:1px;top:165px;width:123px;height:35px;border:3px solid #b43bd6;border-radius:6px;box-shadow:inset 0 3px 4px rgba(0,0,0,0.38),0 3px 4px rgba(0,0,0,0.3)"></div>
<div class="abs" style="left:1106px;top:200px;width:108px;height:308px;border:3px solid #b43bd6;border-radius:13px;box-shadow:inset 0 3px 4px rgba(0,0,0,0.25),0 3px 4px rgba(0,0,0,0.3)"></div>
</body></html>
